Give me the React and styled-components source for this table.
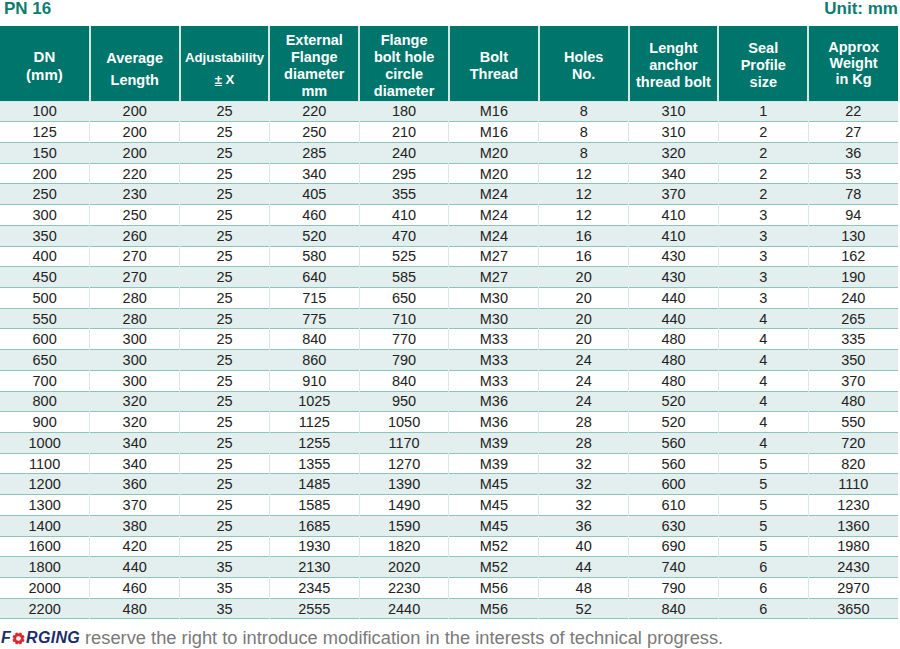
import React from 'react';
import styled, { createGlobalStyle } from 'styled-components';

const GlobalStyle = createGlobalStyle`
  html, body {
    margin: 0;
    padding: 0;
    background: #ffffff;
  }
  body {
    font-family: 'Liberation Sans', Arial, sans-serif;
  }
`;

const headers = [
  { lines: ['DN', '(mm)'], size: 15, lh: 18, pad: 5 },
  { lines: ['Average', 'Length'], size: 14.5, lh: 22, pad: 11 },
  { lines: ['Adjustability', '± X'], size: 13.2, lh: 22, pad: 11, under: true },
  { lines: ['External', 'Flange', 'diameter', 'mm'], size: 14.5, lh: 17, pad: 5 },
  { lines: ['Flange', 'bolt hole', 'circle', 'diameter'], size: 14.5, lh: 17, pad: 5 },
  { lines: ['Bolt', 'Thread'], size: 14.5, lh: 17, pad: 5 },
  { lines: ['Holes', 'No.'], size: 14.5, lh: 17, pad: 5 },
  { lines: ['Lenght', 'anchor', 'thread bolt'], size: 14.5, lh: 17, pad: 5 },
  { lines: ['Seal', 'Profile', 'size'], size: 14.5, lh: 17, pad: 5 },
  { lines: ['Approx', 'Weight', 'in Kg'], size: 14.5, lh: 16.2, pad: 0 },
];

const rows = [
  [100, 200, 25, 220, 180, 'M16', 8, 310, 1, 22],
  [125, 200, 25, 250, 210, 'M16', 8, 310, 2, 27],
  [150, 200, 25, 285, 240, 'M20', 8, 320, 2, 36],
  [200, 220, 25, 340, 295, 'M20', 12, 340, 2, 53],
  [250, 230, 25, 405, 355, 'M24', 12, 370, 2, 78],
  [300, 250, 25, 460, 410, 'M24', 12, 410, 3, 94],
  [350, 260, 25, 520, 470, 'M24', 16, 410, 3, 130],
  [400, 270, 25, 580, 525, 'M27', 16, 430, 3, 162],
  [450, 270, 25, 640, 585, 'M27', 20, 430, 3, 190],
  [500, 280, 25, 715, 650, 'M30', 20, 440, 3, 240],
  [550, 280, 25, 775, 710, 'M30', 20, 440, 4, 265],
  [600, 300, 25, 840, 770, 'M33', 20, 480, 4, 335],
  [650, 300, 25, 860, 790, 'M33', 24, 480, 4, 350],
  [700, 300, 25, 910, 840, 'M33', 24, 480, 4, 370],
  [800, 320, 25, 1025, 950, 'M36', 24, 520, 4, 480],
  [900, 320, 25, 1125, 1050, 'M36', 28, 520, 4, 550],
  [1000, 340, 25, 1255, 1170, 'M39', 28, 560, 4, 720],
  [1100, 340, 25, 1355, 1270, 'M39', 32, 560, 5, 820],
  [1200, 360, 25, 1485, 1390, 'M45', 32, 600, 5, 1110],
  [1300, 370, 25, 1585, 1490, 'M45', 32, 610, 5, 1230],
  [1400, 380, 25, 1685, 1590, 'M45', 36, 630, 5, 1360],
  [1600, 420, 25, 1930, 1820, 'M52', 40, 690, 5, 1980],
  [1800, 440, 35, 2130, 2020, 'M52', 44, 740, 6, 2430],
  [2000, 460, 35, 2345, 2230, 'M56', 48, 790, 6, 2970],
  [2200, 480, 35, 2555, 2440, 'M56', 52, 840, 6, 3650],
];

// red gear standing in for the O of the logo
const GearO = () => (
  <svg width="13" height="13" viewBox="0 0 20 20" style={{ margin: '0 1px' }}>
    <circle cx="10" cy="10" r="9.5" fill="#e0262b" />
    {Array.from({ length: 8 }).map((_, i) => {
      const a = (i * Math.PI) / 4;
      return (
        <circle
          key={i}
          cx={10 + Math.cos(a) * 9.3}
          cy={10 + Math.sin(a) * 9.3}
          r="1.7"
          fill="#ffffff"
        />
      );
    })}
    <circle cx="10" cy="10" r="3.6" fill="#ffffff" />
  </svg>
);

const Table = () => (
  <DataTable>
    <thead>
      <tr>
        {headers.map((h, i) => (
          <HeadCell key={i} $size={h.size} $lh={h.lh} $pad={h.pad}>
            {h.lines.map((l, j) => (
              <span key={j}>
                {h.under && l === '± X' ? (
                  <>
                    <PlusMinus>±</PlusMinus> X
                  </>
                ) : (
                  l
                )}
                {j < h.lines.length - 1 && <br />}
              </span>
            ))}
          </HeadCell>
        ))}
      </tr>
    </thead>
    <tbody>
      {rows.map((r, i) => (
        <BodyRow key={i} $shaded={i % 2 === 0}>
          {r.map((v, j) => (
            <Cell key={j} $shaded={i % 2 === 0}>
              {v}
            </Cell>
          ))}
        </BodyRow>
      ))}
    </tbody>
  </DataTable>
);

const App = () => (
  <>
    <GlobalStyle />
    <Page>
      <TitleBar>
        <Title>PN 16</Title>
        <Title>Unit: mm</Title>
      </TitleBar>
      <Table />
      <Footer>
        <Brand>
          F<GearO />RGING
        </Brand>
        <Note>reserve the right to introduce modification in the interests of technical progress.</Note>
      </Footer>
    </Page>
  </>
);

const Page = styled.div`
  width: 900px;
  height: 649px;
  overflow: hidden;
  background: #ffffff;
`;

const TitleBar = styled.div`
  display: flex;
  justify-content: space-between;
  align-items: flex-start;
  height: 26px;
  padding: 0 2px 0 4px;
  box-sizing: border-box;
`;

const Title = styled.div`
  font-family: 'Liberation Sans', Arial, sans-serif;
  font-weight: 700;
  font-size: 17px;
  line-height: 18px;
  color: #0c7c72;
`;

const DataTable = styled.table`
  width: 898px;
  table-layout: fixed;
  border-collapse: collapse;
  font-family: 'Liberation Sans', Arial, sans-serif;
`;

const HeadCell = styled.th`
  height: 75px;
  padding: ${(p) => p.$pad}px 0 0;
  box-sizing: border-box;
  background: #00756b;
  color: #ffffff;
  font-weight: 700;
  font-size: ${(p) => p.$size}px;
  line-height: ${(p) => p.$lh}px;
  text-align: center;
  vertical-align: middle;
  border-left: 2px solid #d3e8e5;
  border-bottom: 1px solid #d3e8e5;

  &:first-child {
    border-left: none;
  }
`;

const PlusMinus = styled.span`
  text-decoration: underline;
`;

const BodyRow = styled.tr`
  background: ${(p) => (p.$shaded ? '#e2efee' : '#ffffff')};
  border-bottom: 1px solid #8cc3bd;
`;

const Cell = styled.td`
  height: 19.72px;
  padding: 0;
  text-align: center;
  vertical-align: middle;
  font-size: 14.5px;
  line-height: 16px;
  color: #222222;
  border-left: 1px solid ${(p) => (p.$shaded ? '#e2efee' : '#d6e9e7')};

  &:first-child {
    border-left: none;
  }
`;

const Footer = styled.div`
  display: flex;
  align-items: center;
  gap: 5px;
  height: 29px;
  padding: 9px 0 0 1px;
  box-sizing: border-box;
`;

const Brand = styled.span`
  display: inline-flex;
  align-items: center;
  font-family: 'Liberation Sans', Arial, sans-serif;
  font-weight: 700;
  font-style: italic;
  font-size: 16px;
  color: #1d2d6b;
  letter-spacing: 0.3px;
`;

const Note = styled.span`
  font-family: 'Liberation Sans', Arial, sans-serif;
  font-size: 18.3px;
  color: #7a7a7a;
`;

export default App;
